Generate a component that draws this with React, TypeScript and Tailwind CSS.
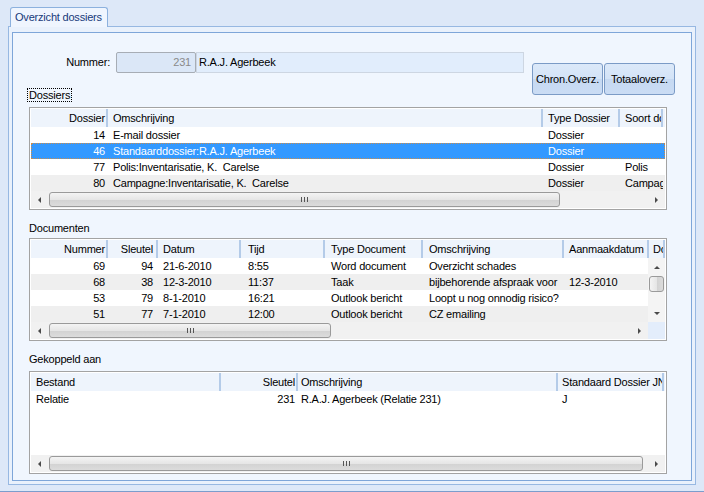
import React from "react";
import clsx from "clsx";

type Col = { label: string; w: string; right?: boolean; pad: string; hpad: string };

const dossierCols: Col[] = [
  { label: "Dossier", w: "w-[77px]", right: true, pad: "pr-[3px]", hpad: "pr-px" },
  { label: "Omschrijving", w: "w-[435px]", pad: "pl-[5px]", hpad: "pl-[5px]" },
  { label: "Type Dossier", w: "w-[77px]", pad: "pl-[5px]", hpad: "pl-[5px]" },
  { label: "Soort dossier", w: "w-[43px]", pad: "pl-[5px]", hpad: "pl-[5px]" },
];

const dossierRows = [
  ["14", "E-mail dossier", "Dossier", ""],
  ["46", "Standaarddossier:R.A.J. Agerbeek", "Dossier", ""],
  ["77", "Polis:Inventarisatie, K.  Carelse", "Dossier", "Polis"],
  ["80", "Campagne:Inventarisatie, K.  Carelse", "Dossier", "Campagne"],
];

const docCols: Col[] = [
  { label: "Nummer", w: "w-[77px]", right: true, pad: "pr-[3px]", hpad: "pr-px" },
  { label: "Sleutel", w: "w-[50px]", right: true, pad: "pr-[5px]", hpad: "pr-[3px]" },
  { label: "Datum", w: "w-[83px]", pad: "pl-[5px]", hpad: "pl-[5px]" },
  { label: "Tijd", w: "w-[84px]", pad: "pl-[7px]", hpad: "pl-[7px]" },
  { label: "Type Document", w: "w-[98px]", pad: "pl-[6px]", hpad: "pl-[6px]" },
  { label: "Omschrijving", w: "w-[141px]", pad: "pl-[6px]", hpad: "pl-[6px]" },
  { label: "Aanmaakdatum", w: "w-[85px]", pad: "pl-[5px]", hpad: "pl-[5px]" },
  { label: "Documentsoort", w: "w-[16px]", pad: "pl-[4px]", hpad: "pl-[4px]" },
];

const docRows = [
  ["69", "94", "21-6-2010", "8:55", "Word document", "Overzicht schades", "", ""],
  ["68", "38", "12-3-2010", "11:37", "Taak", "bijbehorende afspraak voor", "12-3-2010", ""],
  ["53", "79", "8-1-2010", "16:21", "Outlook bericht", "Loopt u nog onnodig risico?", "", ""],
  ["51", "77", "7-1-2010", "12:00", "Outlook bericht", "CZ emailing", "", ""],
];

const linkCols: Col[] = [
  { label: "Bestand", w: "w-[190px]", pad: "pl-[5px]", hpad: "pl-[5px]" },
  { label: "Sleutel", w: "w-[77px]", right: true, pad: "pr-[3px]", hpad: "pr-px" },
  { label: "Omschrijving", w: "w-[260px]", pad: "pl-[3px]", hpad: "pl-[3px]" },
  { label: "Standaard Dossier JN", w: "w-[106px]", pad: "pl-[4px]", hpad: "pl-[4px]" },
];

const linkRows = [["Relatie", "231", "R.A.J. Agerbeek (Relatie 231)", "J"]];

function Grip() {
  return (
    <div className="flex gap-[2px]">
      <div className="w-px h-[5px] bg-[#555]" />
      <div className="w-px h-[5px] bg-[#555]" />
      <div className="w-px h-[5px] bg-[#555]" />
    </div>
  );
}

function HScroll({ thumb, corner }: { thumb: string; corner?: boolean }) {
  return (
    <div className="h-[17px] flex shrink-0 bg-[#f1f1f1]">
      <div className="w-[17px] flex items-center justify-center">
        <div className="w-0 h-0 border-y-[3px] border-y-transparent border-r-[3px] border-r-[#4a4a4a]" />
      </div>
      <div className="flex-1 py-px pl-px">
        <div
          className={clsx(
            "h-full rounded-[3px] border border-[#9a9a9a] bg-[linear-gradient(#f4f4f4,#e6e6e6_50%,#d2d2d2_51%,#dcdcdc)] flex items-center justify-center",
            thumb
          )}
        >
          <Grip />
        </div>
      </div>
      <div className="w-[17px] flex items-center justify-center">
        <div className="w-0 h-0 border-y-[3px] border-y-transparent border-l-[3px] border-l-[#4a4a4a]" />
      </div>
      {corner && <div className="w-[17px] bg-[#e3edfb]" />}
    </div>
  );
}

function VScroll() {
  return (
    <div className="w-[17px] h-full flex flex-col bg-[#f4f4f4] shrink-0">
      <div className="h-[18px] flex items-center justify-center">
        <div className="w-0 h-0 border-x-[3px] border-x-transparent border-b-[3px] border-b-[#4a4a4a]" />
      </div>
      <div className="flex-1 px-px">
        <div className="h-[16px] rounded-[3px] border border-[#9a9a9a] bg-[linear-gradient(to_right,#f4f4f4,#e6e6e6_50%,#d2d2d2_51%,#dcdcdc)]" />
      </div>
      <div className="h-[17px] flex items-center justify-center">
        <div className="w-0 h-0 border-x-[3px] border-x-transparent border-t-[3px] border-t-[#4a4a4a]" />
      </div>
    </div>
  );
}

function Grid({
  cols,
  rows,
  selected = -1,
  thumb,
  vscroll = false,
}: {
  cols: Col[];
  rows: string[][];
  selected?: number;
  thumb: string;
  vscroll?: boolean;
}) {
  return (
    <div className="w-[638px] h-[103px] border border-[#a3a3a3] bg-white p-px flex flex-col shrink-0">
      <div className="h-[18px] flex bg-[#eef4fc] overflow-hidden shrink-0 whitespace-nowrap">
        {cols.map((c) => (
          <div
            key={c.label}
            className={clsx(
              "h-full flex items-center shrink-0 overflow-hidden border-r-2 border-[#b4cbe8]",
              c.w,
              c.hpad,
              c.right && "justify-end"
            )}
          >
            {c.label}
          </div>
        ))}
      </div>
      <div className="h-[64px] flex shrink-0">
        <div className="flex-1 overflow-hidden">
          {rows.map((r, i) => (
            <div
              key={i}
              className={clsx(
                "flex h-[16px] leading-[16px] whitespace-pre",
                i === selected
                  ? "bg-[#3399ff] text-white outline-1 outline-dotted outline-[#c98c4c] -outline-offset-1"
                  : i % 2 === 1
                  ? "bg-[#efefef]"
                  : "bg-white"
              )}
            >
              {cols.map((c, j) => (
                <div
                  key={j}
                  className={clsx("shrink-0 overflow-hidden", c.w, c.pad, c.right && "text-right")}
                >
                  {r[j]}
                </div>
              ))}
            </div>
          ))}
        </div>
        {vscroll && <VScroll />}
      </div>
      <HScroll thumb={thumb} corner={vscroll} />
    </div>
  );
}

export default function App() {
  return (
    <div className="w-[704px] h-[492px] bg-[#dde8f8] font-['Liberation_Sans',Arial,sans-serif] text-[11px] tracking-[-0.2px] text-black flex flex-col border-b border-[#7c9dcc] overflow-hidden">
      <div className="h-[26px] pl-[10px] pt-[7px] flex shrink-0">
        <div className="relative z-10 h-[20px] w-[98px] border border-b-0 border-[#8cb1de] rounded-t-[3px] bg-[#eff5fe] pl-[4px] leading-[18px] text-[#17397a]">
          Overzicht dossiers
        </div>
      </div>

      <div className="ml-[8px] w-[688px] h-[459px] border border-[#97b8e2] bg-[#e9f1fc] pt-[5px] px-[3px] pb-[3px] shrink-0">
        <div className="h-full border border-[#7ea6d9] bg-[#f0f6fe] pl-[16px] flex flex-col">
          <div className="flex h-[74px] shrink-0">
            <div className="w-[495px] flex flex-col">
              <div className="flex items-center mt-[19px] h-[21px]">
                <div className="w-[81px] text-right">Nummer:</div>
                <div className="ml-[6px] w-[80px] h-full border border-[#a7adb5] rounded-[2px] bg-[#dbe7f7] text-[#8a8a8a] text-right pr-[4px] leading-[19px]">
                  231
                </div>
                <div className="w-[328px] h-full border border-[#cdd6e2] bg-[#e1edfc] pl-[2px] leading-[19px]">
                  R.A.J. Agerbeek
                </div>
              </div>
              <div className="mt-[15px] -ml-[2px] self-start h-[14px] border border-dotted border-black px-px leading-[12px]">
                Dossiers
              </div>
            </div>
            <div className="ml-[8px] mt-[30px] flex gap-px">
              <div className="w-[71px] h-[32px] border border-[#7b9bc6] rounded-[3px] bg-[linear-gradient(#dce9f9,#d3e3f7_50%,#c6d9f2_51%,#cadcf4)] flex items-center justify-center">
                Chron.Overz.
              </div>
              <div className="w-[71px] h-[32px] border border-[#7b9bc6] rounded-[3px] bg-[linear-gradient(#dce9f9,#d3e3f7_50%,#c6d9f2_51%,#cadcf4)] flex items-center justify-center">
                Totaaloverz.
              </div>
            </div>
          </div>

          <Grid cols={dossierCols} rows={dossierRows} selected={1} thumb="w-[511px]" />

          <div className="mt-[11px] mb-[3px] h-[14px] leading-[14px] shrink-0">Documenten</div>
          <Grid cols={docCols} rows={docRows} thumb="w-[282px]" vscroll />

          <div className="mt-[11px] mb-[5px] h-[14px] leading-[14px] shrink-0">Gekoppeld aan</div>
          <Grid cols={linkCols} rows={linkRows} thumb="w-[594px]" />
        </div>
      </div>
    </div>
  );
}
